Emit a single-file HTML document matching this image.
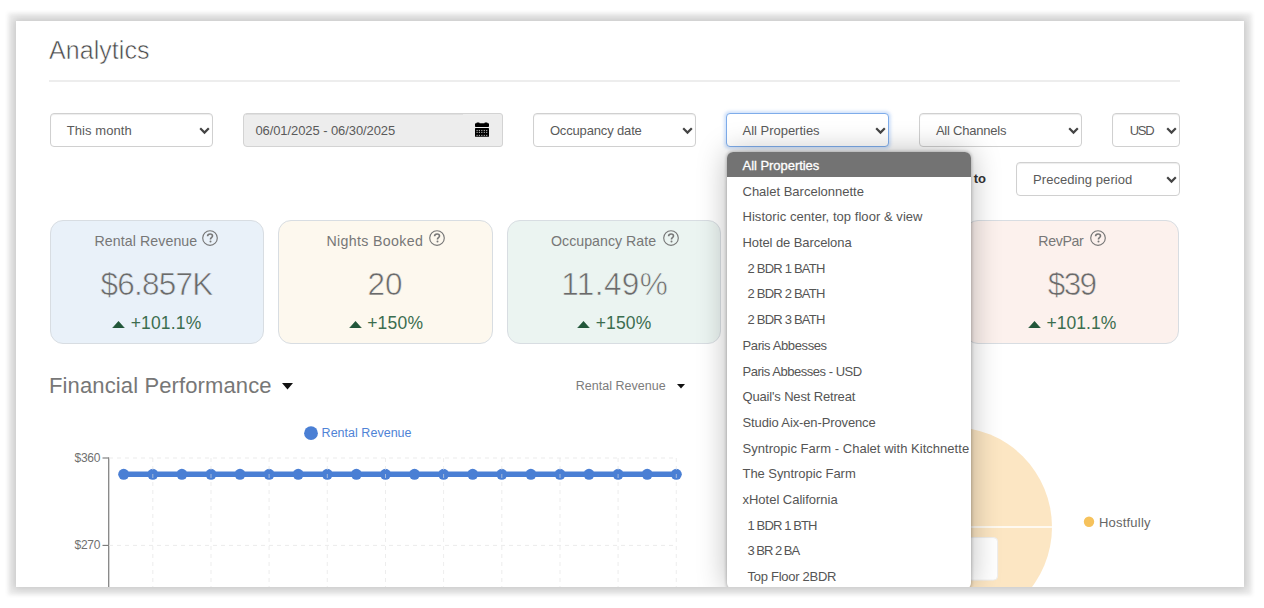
<!DOCTYPE html>
<html><head><meta charset="utf-8">
<style>
*{box-sizing:border-box;margin:0;padding:0}
html,body{width:1264px;height:608px;overflow:hidden;background:#fff;font-family:"Liberation Sans",sans-serif}
.abs{position:absolute}
.t{position:absolute;white-space:nowrap;line-height:1}
#card{position:absolute;left:16px;top:21px;width:1228px;height:566px;background:#fff;box-shadow:0 0 4px 8px rgba(0,0,0,0.08),0 0 8px 2px rgba(0,0,0,0.16)}
#clip{position:absolute;left:16px;top:21px;width:1228px;height:566px;overflow:hidden}
#in{position:absolute;left:-16px;top:-21px;width:1264px;height:608px}
.box{position:absolute;border:1px solid #d0d0d0;border-radius:4px;background:#fff;box-shadow:inset 0 1px 1px rgba(0,0,0,0.075)}
.kpi{position:absolute;border:1px solid #d8dde2;border-radius:13px}
#dd{position:absolute;left:726.5px;top:151.5px;width:244.7px;height:437px;background:#fff;border-radius:6px;box-shadow:0 0 3px 1px rgba(0,0,0,0.2),0 0 30px 0 rgba(0,0,0,0.28);overflow:hidden}
.it{position:relative;height:25.7px;padding-left:16px;font-size:13px;color:#555;white-space:nowrap;line-height:1}
.it span{position:absolute;top:7.5px}
.it.hl{background:#737373;color:#fff;-webkit-text-stroke:0.3px #fff}
</style></head>
<body>
<div id="card"></div>
<div id="clip"><div id="in">

<div class="t" style="left:49px;top:37.74px;font-size:25px;color:#4a4a4a;letter-spacing:0.058px;-webkit-text-stroke:0.55px #fff;">Analytics</div>
<div class="abs" style="left:49px;top:80px;width:1131px;height:2px;background:#ededed"></div>
<div class="box" style="left:50px;top:113px;width:163px;height:34px;"></div>
<div class="t" style="left:66.8px;top:124.20px;font-size:13px;color:#5a5a5a;letter-spacing:0.059px;">This month</div>
<svg class="abs" style="left:199.4px;top:127px" width="11" height="7.5" viewBox="0 0 11 7.5"><path d="M1.2 1.3 L5.5 5.6 L9.8 1.3" fill="none" stroke="#444" stroke-width="2.2"/></svg>
<div class="box" style="left:243px;top:113px;width:260px;height:34px;background:#ededed;border-color:#d3d3d3;box-shadow:none;border-radius:4px 3px 3px 4px"></div>
<div class="t" style="left:255.4px;top:124.20px;font-size:13px;color:#5a5a5a;letter-spacing:-0.084px;">06/01/2025 - 06/30/2025</div>
<div class="abs" style="left:246px;top:114px;width:217px;height:1px;background:rgba(0,0,0,0.06)"></div>
<svg class="abs" style="left:475px;top:122px" width="14" height="15" viewBox="0 0 14 15"><rect x="0" y="1.3" width="14" height="3.7" rx="0.8" fill="#000"/><rect x="1.4" y="0.6" width="3.2" height="2" rx="0.6" fill="#000"/><rect x="9.4" y="0.6" width="3.2" height="2" rx="0.6" fill="#000"/><rect x="0" y="6" width="14" height="8.8" rx="0.6" fill="#000"/><g fill="#b8b8b8"><rect x="1.55" y="7.95" width="1.1" height="1.1"/><rect x="3.85" y="7.95" width="1.1" height="1.1"/><rect x="6.25" y="7.95" width="1.1" height="1.1"/><rect x="8.75" y="7.95" width="1.1" height="1.1"/><rect x="11.15" y="7.95" width="1.1" height="1.1"/><rect x="1.55" y="9.85" width="1.1" height="1.1"/><rect x="3.85" y="9.85" width="1.1" height="1.1"/><rect x="6.25" y="9.85" width="1.1" height="1.1"/><rect x="8.75" y="9.85" width="1.1" height="1.1"/><rect x="11.15" y="9.85" width="1.1" height="1.1"/><rect x="1.55" y="12.85" width="1.1" height="1.1"/><rect x="3.85" y="12.85" width="1.1" height="1.1"/><rect x="6.25" y="12.85" width="1.1" height="1.1"/><rect x="8.75" y="12.85" width="1.1" height="1.1"/><rect x="11.15" y="12.85" width="1.1" height="1.1"/></g></svg>
<div class="box" style="left:533px;top:113px;width:163px;height:34px;"></div>
<div class="t" style="left:549.9px;top:124.20px;font-size:13px;color:#5a5a5a;letter-spacing:-0.155px;">Occupancy date</div>
<svg class="abs" style="left:682.4px;top:127px" width="11" height="7.5" viewBox="0 0 11 7.5"><path d="M1.2 1.3 L5.5 5.6 L9.8 1.3" fill="none" stroke="#444" stroke-width="2.2"/></svg>
<div class="box" style="left:726px;top:113px;width:163px;height:34px;border-color:#7eacea;box-shadow:0 0 3px 1.5px rgba(128,176,240,0.35)"></div>
<div class="t" style="left:742.5px;top:124.20px;font-size:13px;color:#5a5a5a;letter-spacing:-0.016px;">All Properties</div>
<svg class="abs" style="left:875.4px;top:127px" width="11" height="7.5" viewBox="0 0 11 7.5"><path d="M1.2 1.3 L5.5 5.6 L9.8 1.3" fill="none" stroke="#444" stroke-width="2.2"/></svg>
<div class="box" style="left:919px;top:113px;width:163px;height:34px;"></div>
<div class="t" style="left:935.9px;top:124.20px;font-size:13px;color:#5a5a5a;letter-spacing:-0.226px;">All Channels</div>
<svg class="abs" style="left:1068.4px;top:127px" width="11" height="7.5" viewBox="0 0 11 7.5"><path d="M1.2 1.3 L5.5 5.6 L9.8 1.3" fill="none" stroke="#444" stroke-width="2.2"/></svg>
<div class="box" style="left:1112px;top:113px;width:68px;height:34px;"></div>
<div class="t" style="left:1129.7px;top:124.20px;font-size:13px;color:#5a5a5a;letter-spacing:-1.280px;">USD</div>
<svg class="abs" style="left:1166.4px;top:127px" width="11" height="7.5" viewBox="0 0 11 7.5"><path d="M1.2 1.3 L5.5 5.6 L9.8 1.3" fill="none" stroke="#444" stroke-width="2.2"/></svg>
<div class="t" style="right:278px;top:172.20px;font-size:13px;font-weight:bold;color:#333">Compare to</div>
<div class="box" style="left:1016px;top:162px;width:164px;height:34px;"></div>
<div class="t" style="left:1033.1px;top:173.20px;font-size:13px;color:#5a5a5a;letter-spacing:0.056px;">Preceding period</div>
<svg class="abs" style="left:1166.4px;top:176px" width="11" height="7.5" viewBox="0 0 11 7.5"><path d="M1.2 1.3 L5.5 5.6 L9.8 1.3" fill="none" stroke="#444" stroke-width="2.2"/></svg>
<div class="kpi" style="left:50px;top:220px;width:214px;height:124px;background:#e9f1f9"></div>
<div class="t" style="left:94.5px;top:233.78px;font-size:14.2px;color:#777;letter-spacing:0.073px;">Rental Revenue</div>
<svg class="abs" style="left:202.1px;top:229.9px" width="16" height="16" viewBox="0 0 16 16"><circle cx="8" cy="8" r="7.3" fill="none" stroke="#777" stroke-width="1.15"/><path d="M5.6 6.3 C5.6 4.9 6.6 4.0 8.1 4.0 C9.5 4.0 10.5 4.8 10.5 6.0 C10.5 7.5 8.5 7.6 8.5 9.1 V9.5" fill="none" stroke="#777" stroke-width="1.6"/><circle cx="8.5" cy="11.4" r="1" fill="#777"/></svg>
<div class="t" style="left:100.4px;top:268.54px;font-size:31.5px;color:#6a6a6a;letter-spacing:-0.741px;-webkit-text-stroke:0.6px #e9f1f9;">$6.857K</div>
<svg class="abs" style="left:112px;top:320.7px" width="13" height="7.5" viewBox="0 0 13 7.5"><path d="M6.5 0.3 L12.7 7.3 H0.3Z" fill="#22573a" stroke="#22573a" stroke-width="0.5" stroke-linejoin="round"/></svg>
<div class="t" style="left:130.7px;top:315.39px;font-size:17.5px;color:#3b6d4f;letter-spacing:0.165px;">+101.1%</div>
<div class="kpi" style="left:278px;top:220px;width:214.5px;height:124px;background:#fdf8ee"></div>
<div class="t" style="left:326.5px;top:233.78px;font-size:14.2px;color:#777;letter-spacing:0.343px;">Nights Booked</div>
<svg class="abs" style="left:428.6px;top:229.9px" width="16" height="16" viewBox="0 0 16 16"><circle cx="8" cy="8" r="7.3" fill="none" stroke="#777" stroke-width="1.15"/><path d="M5.6 6.3 C5.6 4.9 6.6 4.0 8.1 4.0 C9.5 4.0 10.5 4.8 10.5 6.0 C10.5 7.5 8.5 7.6 8.5 9.1 V9.5" fill="none" stroke="#777" stroke-width="1.6"/><circle cx="8.5" cy="11.4" r="1" fill="#777"/></svg>
<div class="t" style="left:367.6px;top:268.54px;font-size:31.5px;color:#6a6a6a;letter-spacing:-0.119px;-webkit-text-stroke:0.6px #fdf8ee;">20</div>
<svg class="abs" style="left:348.5px;top:320.7px" width="13" height="7.5" viewBox="0 0 13 7.5"><path d="M6.5 0.3 L12.7 7.3 H0.3Z" fill="#22573a" stroke="#22573a" stroke-width="0.5" stroke-linejoin="round"/></svg>
<div class="t" style="left:367.2px;top:315.39px;font-size:17.5px;color:#3b6d4f;letter-spacing:0.196px;">+150%</div>
<div class="kpi" style="left:507px;top:220px;width:214px;height:124px;background:#ebf4f1"></div>
<div class="t" style="left:551px;top:233.78px;font-size:14.2px;color:#777;letter-spacing:0.016px;">Occupancy Rate</div>
<svg class="abs" style="left:662.7px;top:229.9px" width="16" height="16" viewBox="0 0 16 16"><circle cx="8" cy="8" r="7.3" fill="none" stroke="#777" stroke-width="1.15"/><path d="M5.6 6.3 C5.6 4.9 6.6 4.0 8.1 4.0 C9.5 4.0 10.5 4.8 10.5 6.0 C10.5 7.5 8.5 7.6 8.5 9.1 V9.5" fill="none" stroke="#777" stroke-width="1.6"/><circle cx="8.5" cy="11.4" r="1" fill="#777"/></svg>
<div class="t" style="left:561.2px;top:268.54px;font-size:31.5px;color:#6a6a6a;letter-spacing:0.422px;-webkit-text-stroke:0.6px #ebf4f1;">11.49%</div>
<svg class="abs" style="left:577px;top:320.7px" width="13" height="7.5" viewBox="0 0 13 7.5"><path d="M6.5 0.3 L12.7 7.3 H0.3Z" fill="#22573a" stroke="#22573a" stroke-width="0.5" stroke-linejoin="round"/></svg>
<div class="t" style="left:595.7px;top:315.39px;font-size:17.5px;color:#3b6d4f;letter-spacing:0.146px;">+150%</div>
<div class="kpi" style="left:736px;top:220px;width:214px;height:124px;background:#f0f0f0"></div>
<div class="kpi" style="left:965px;top:220px;width:214px;height:124px;background:#fcf1ed"></div>
<div class="t" style="left:1038.3px;top:233.78px;font-size:14.2px;color:#777;letter-spacing:-0.377px;">RevPar</div>
<svg class="abs" style="left:1090px;top:229.9px" width="16" height="16" viewBox="0 0 16 16"><circle cx="8" cy="8" r="7.3" fill="none" stroke="#777" stroke-width="1.15"/><path d="M5.6 6.3 C5.6 4.9 6.6 4.0 8.1 4.0 C9.5 4.0 10.5 4.8 10.5 6.0 C10.5 7.5 8.5 7.6 8.5 9.1 V9.5" fill="none" stroke="#777" stroke-width="1.6"/><circle cx="8.5" cy="11.4" r="1" fill="#777"/></svg>
<div class="t" style="left:1047.8px;top:268.54px;font-size:31.5px;color:#6a6a6a;letter-spacing:-1.619px;-webkit-text-stroke:0.6px #fcf1ed;">$39</div>
<svg class="abs" style="left:1027.8px;top:320.7px" width="13" height="7.5" viewBox="0 0 13 7.5"><path d="M6.5 0.3 L12.7 7.3 H0.3Z" fill="#22573a" stroke="#22573a" stroke-width="0.5" stroke-linejoin="round"/></svg>
<div class="t" style="left:1046.5px;top:315.39px;font-size:17.5px;color:#3b6d4f;letter-spacing:0.031px;">+101.1%</div>
<div class="t" style="left:49px;top:374.98px;font-size:22px;color:#777;letter-spacing:0.122px;">Financial Performance</div>
<svg class="abs" style="left:282px;top:383px" width="11" height="6.5" viewBox="0 0 11 6.5"><path d="M0 0 H11 L5.5 6.5Z" fill="#111"/></svg>
<div class="t" style="left:575.8px;top:379.72px;font-size:12.5px;color:#7c7c7c;letter-spacing:0.024px;">Rental Revenue</div>
<svg class="abs" style="left:677px;top:384px" width="8" height="4.5" viewBox="0 0 8 4.5"><path d="M0 0 H8 L4 4.5Z" fill="#111"/></svg>
<div class="t" style="left:321.6px;top:427.02px;font-size:12.5px;color:#4f83d6;letter-spacing:0.024px;">Rental Revenue</div>
<div class="t" style="left:74.5px;top:452.04px;font-size:12px;color:#707070;letter-spacing:-0.240px;">$360</div>
<div class="t" style="left:74.5px;top:539.44px;font-size:12px;color:#707070;letter-spacing:-0.240px;">$270</div>
<div class="t" style="left:1099px;top:515.50px;font-size:13px;color:#666;letter-spacing:0.206px;">Hostfully</div>
<svg class="abs" style="left:0;top:0" width="1264" height="608" viewBox="0 0 1264 608">
<circle cx="311" cy="433.2" r="6.9" fill="#4a7fd4"/>
<line x1="102.5" y1="458" x2="109" y2="458" stroke="#777" stroke-width="1.1"/>
<line x1="102.5" y1="545.4" x2="109" y2="545.4" stroke="#777" stroke-width="1.1"/>
<line x1="108.7" y1="457.5" x2="108.7" y2="600" stroke="#858585" stroke-width="1.3"/>
<line x1="109" y1="458" x2="677" y2="458" stroke="#ebebeb" stroke-dasharray="4 4" stroke-width="1"/>
<line x1="109" y1="545.4" x2="677" y2="545.4" stroke="#ebebeb" stroke-dasharray="4 4" stroke-width="1"/>
<polyline points="123.7,474.3 152.8,474.3 181.9,474.3 211.0,474.3 240.0,474.3 269.1,474.3 298.2,474.3 327.3,474.3 356.4,474.3 385.5,474.3 414.5,474.3 443.6,474.3 472.7,474.3 501.8,474.3 530.9,474.3 560.0,474.3 589.0,474.3 618.1,474.3 647.2,474.3 676.3,474.3" fill="none" stroke="#4a7fd4" stroke-width="5.4"/>
<circle cx="123.7" cy="474.3" r="5.5" fill="#4a7fd4"/>
<circle cx="152.8" cy="474.3" r="5.5" fill="#4a7fd4"/>
<circle cx="181.9" cy="474.3" r="5.5" fill="#4a7fd4"/>
<circle cx="211.0" cy="474.3" r="5.5" fill="#4a7fd4"/>
<circle cx="240.0" cy="474.3" r="5.5" fill="#4a7fd4"/>
<circle cx="269.1" cy="474.3" r="5.5" fill="#4a7fd4"/>
<circle cx="298.2" cy="474.3" r="5.5" fill="#4a7fd4"/>
<circle cx="327.3" cy="474.3" r="5.5" fill="#4a7fd4"/>
<circle cx="356.4" cy="474.3" r="5.5" fill="#4a7fd4"/>
<circle cx="385.5" cy="474.3" r="5.5" fill="#4a7fd4"/>
<circle cx="414.5" cy="474.3" r="5.5" fill="#4a7fd4"/>
<circle cx="443.6" cy="474.3" r="5.5" fill="#4a7fd4"/>
<circle cx="472.7" cy="474.3" r="5.5" fill="#4a7fd4"/>
<circle cx="501.8" cy="474.3" r="5.5" fill="#4a7fd4"/>
<circle cx="530.9" cy="474.3" r="5.5" fill="#4a7fd4"/>
<circle cx="560.0" cy="474.3" r="5.5" fill="#4a7fd4"/>
<circle cx="589.0" cy="474.3" r="5.5" fill="#4a7fd4"/>
<circle cx="618.1" cy="474.3" r="5.5" fill="#4a7fd4"/>
<circle cx="647.2" cy="474.3" r="5.5" fill="#4a7fd4"/>
<circle cx="676.3" cy="474.3" r="5.5" fill="#4a7fd4"/>
<line x1="152.8" y1="458" x2="152.8" y2="600" stroke="rgba(225,225,225,0.6)" stroke-dasharray="4 4" stroke-width="1"/>
<line x1="211.0" y1="458" x2="211.0" y2="600" stroke="rgba(225,225,225,0.6)" stroke-dasharray="4 4" stroke-width="1"/>
<line x1="269.1" y1="458" x2="269.1" y2="600" stroke="rgba(225,225,225,0.6)" stroke-dasharray="4 4" stroke-width="1"/>
<line x1="327.3" y1="458" x2="327.3" y2="600" stroke="rgba(225,225,225,0.6)" stroke-dasharray="4 4" stroke-width="1"/>
<line x1="385.5" y1="458" x2="385.5" y2="600" stroke="rgba(225,225,225,0.6)" stroke-dasharray="4 4" stroke-width="1"/>
<line x1="443.6" y1="458" x2="443.6" y2="600" stroke="rgba(225,225,225,0.6)" stroke-dasharray="4 4" stroke-width="1"/>
<line x1="501.8" y1="458" x2="501.8" y2="600" stroke="rgba(225,225,225,0.6)" stroke-dasharray="4 4" stroke-width="1"/>
<line x1="560.0" y1="458" x2="560.0" y2="600" stroke="rgba(225,225,225,0.6)" stroke-dasharray="4 4" stroke-width="1"/>
<line x1="618.1" y1="458" x2="618.1" y2="600" stroke="rgba(225,225,225,0.6)" stroke-dasharray="4 4" stroke-width="1"/>
<line x1="676.3" y1="458" x2="676.3" y2="600" stroke="rgba(225,225,225,0.6)" stroke-dasharray="4 4" stroke-width="1"/>
<circle cx="952" cy="527" r="100" fill="#fce6c3"/>
<line x1="952" y1="527" x2="1053" y2="527" stroke="#fff" stroke-width="1.5"/>
<rect x="930" y="537.6" width="67.6" height="42.5" rx="4" fill="#fff" stroke="#eee" stroke-width="1"/>
<circle cx="1089" cy="521.8" r="5.2" fill="#f6c25c"/>
</svg>
<div id="dd">
<div class="it hl"><span style="letter-spacing:-0.039px">All Properties</span></div>
<div class="it"><span style="letter-spacing:0.001px">Chalet Barcelonnette</span></div>
<div class="it"><span style="letter-spacing:0.048px">Historic center, top floor &amp; view</span></div>
<div class="it"><span style="letter-spacing:-0.085px">Hotel de Barcelona</span></div>
<div class="it" style="padding-left:21px"><span style="letter-spacing:-0.787px">2 BDR 1 BATH</span></div>
<div class="it" style="padding-left:21px"><span style="letter-spacing:-0.787px">2 BDR 2 BATH</span></div>
<div class="it" style="padding-left:21px"><span style="letter-spacing:-0.787px">2 BDR 3 BATH</span></div>
<div class="it"><span style="letter-spacing:-0.386px">Paris Abbesses</span></div>
<div class="it"><span style="letter-spacing:-0.470px">Paris Abbesses - USD</span></div>
<div class="it"><span style="letter-spacing:-0.163px">Quail's Nest Retreat</span></div>
<div class="it"><span style="letter-spacing:-0.126px">Studio Aix-en-Provence</span></div>
<div class="it"><span style="letter-spacing:0.032px">Syntropic Farm - Chalet with Kitchnette</span></div>
<div class="it"><span style="letter-spacing:-0.054px">The Syntropic Farm</span></div>
<div class="it"><span style="letter-spacing:-0.015px">xHotel California</span></div>
<div class="it" style="padding-left:21px"><span style="letter-spacing:-0.875px">1 BDR 1 BTH</span></div>
<div class="it" style="padding-left:21px"><span style="letter-spacing:-1.003px">3 BR 2 BA</span></div>
<div class="it" style="padding-left:21px"><span style="letter-spacing:-0.276px">Top Floor 2BDR</span></div>
</div>
</div></div>
</body></html>
